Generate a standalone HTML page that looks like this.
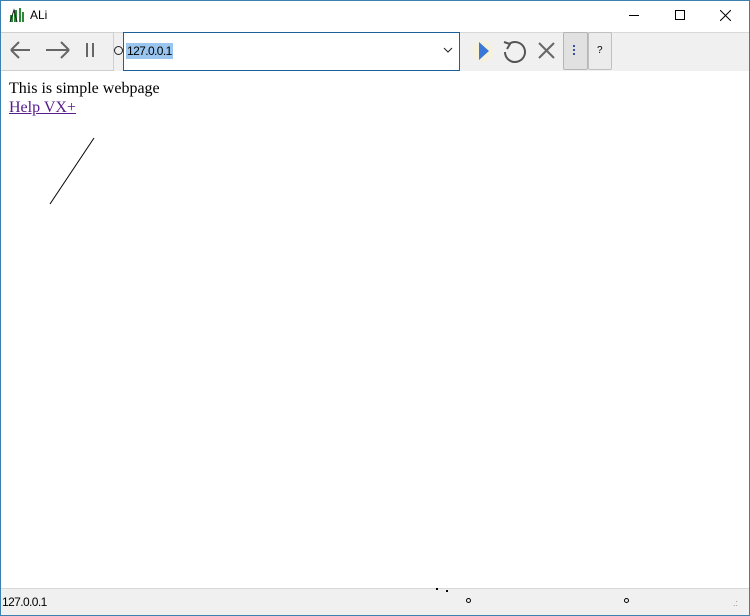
<!DOCTYPE html>
<html><head><style>
*{margin:0;padding:0;box-sizing:border-box}
body{width:750px;height:616px;position:relative;background:#fff;font-family:"Liberation Sans",sans-serif;overflow:hidden}
.frame{position:absolute;inset:0;border:1px solid #3c7fb1;}
.a{position:absolute}
</style></head><body>
<div class="frame"></div>
<!-- title -->
<svg class="a" style="left:9px;top:7px" width="16" height="16"><rect x="1" y="8" width="3" height="7" fill="#2a8a3a"/><rect x="5" y="3" width="3" height="12" fill="#2a8a3a"/><rect x="10" y="1" width="2" height="14" fill="#2a8a3a"/><rect x="13" y="5" width="2" height="10" fill="#2a8a3a"/><path d="M1 15 L5 3 L8 15" stroke="#222" fill="none"/></svg>
<div class="a" style="left:30px;top:8px;font-size:12px;color:#000">ALi</div>
<div class="a" style="left:629px;top:15px;width:10px;height:1px;background:#000"></div>
<div class="a" style="left:675px;top:10px;width:10px;height:10px;border:1px solid #000"></div>
<svg class="a" style="left:720px;top:10px" width="11" height="11"><path d="M0 0L11 11M11 0L0 11" stroke="#000"/></svg>
<!-- toolbar -->
<div class="a" style="left:1px;top:32px;width:748px;height:39px;background:#f0f0f0;border-top:1px solid #d8d8d8"></div>
<div class="a" style="left:1px;top:32px;width:113px;height:39px;border:1px solid #cfcfcf;border-left:none"></div>
<svg class="a" style="left:8px;top:40px" width="90" height="22"><path d="M3 10H22M3 10L11 2M3 10L11 18" stroke="#666" stroke-width="2" fill="none"/><path d="M38 10H61M61 10L53 2M61 10L53 18" stroke="#666" stroke-width="2" fill="none"/><path d="M79 3V17M85 3V17" stroke="#666" stroke-width="2"/></svg>
<div class="a" style="left:114px;top:46px;width:9px;height:9px;border:1.5px solid #222;border-radius:50%"></div>
<div class="a" style="left:123px;top:32px;width:337px;height:39px;background:#fff;border:1px solid #1c5f9a"></div>
<div class="a" style="left:126px;top:43px;height:16px;width:47px;background:#99c5ef"></div>
<div class="a" style="left:127px;top:44px;font-size:12px;color:#000;letter-spacing:-0.6px">127.0.0.1</div>
<svg class="a" style="left:443px;top:47px" width="10" height="6"><path d="M1 1L5 5L9 1" stroke="#222" fill="none"/></svg>
<div class="a" style="left:470px;top:38px;width:26px;height:26px;border-radius:50%;background:radial-gradient(#fdf3c4,#f0f0f0 70%)"></div>
<svg class="a" style="left:478px;top:41px" width="12" height="20"><path d="M1 1L11 10L1 19Z" fill="#3a78d8"/></svg>
<svg class="a" style="left:501px;top:38px" width="28" height="26"><path d="M8 6A10 10 0 1 1 4 14" stroke="#555" stroke-width="2" fill="none"/><path d="M3 4L9 6L6 11" stroke="#555" stroke-width="2" fill="none"/></svg>
<svg class="a" style="left:538px;top:42px" width="17" height="17"><path d="M1 1L16 16M16 1L1 16" stroke="#666" stroke-width="2"/></svg>
<div class="a" style="left:563px;top:32px;width:25px;height:38px;background:#e1e1e1;border:1px solid #b5b5b5;border-radius:2px"></div>
<div class="a" style="left:573px;top:45px;width:2px;height:2px;background:#3a4fa0;box-shadow:0 4px #3a4fa0,0 8px #3a4fa0"></div>
<div class="a" style="left:588px;top:32px;width:24px;height:38px;background:#ececec;border:1px solid #c0c0c0;border-radius:2px"></div>
<div class="a" style="left:597px;top:45px;font-size:10px">?</div>
<!-- content -->
<div class="a" style="left:9px;top:79px;font-family:'Liberation Serif',serif;font-size:16px;color:#000;line-height:19px">This is simple webpage<br><span style="color:#551a8b;text-decoration:underline">Help VX+</span></div>
<svg class="a" style="left:49px;top:137px" width="46" height="68"><path d="M45 1L1 67" stroke="#000"/></svg>
<!-- status -->
<div class="a" style="left:1px;top:588px;width:748px;height:27px;background:#f0f0f0;border-top:1px solid #d8d8d8"></div>
<div class="a" style="left:2px;top:595px;font-size:12px;color:#000;letter-spacing:-0.6px">127.0.0.1</div>
<div class="a" style="left:436px;top:588px;width:2px;height:2px;background:#000"></div>
<div class="a" style="left:446px;top:590px;width:2px;height:2px;background:#000"></div>
<div class="a" style="left:466px;top:598px;width:5px;height:5px;border:1px solid #000;border-radius:50%"></div>
<div class="a" style="left:624px;top:598px;width:5px;height:5px;border:1px solid #000;border-radius:50%"></div>
<div class="a" style="left:733px;top:598px;font-size:9px;color:#888">.:</div>
</body></html>
